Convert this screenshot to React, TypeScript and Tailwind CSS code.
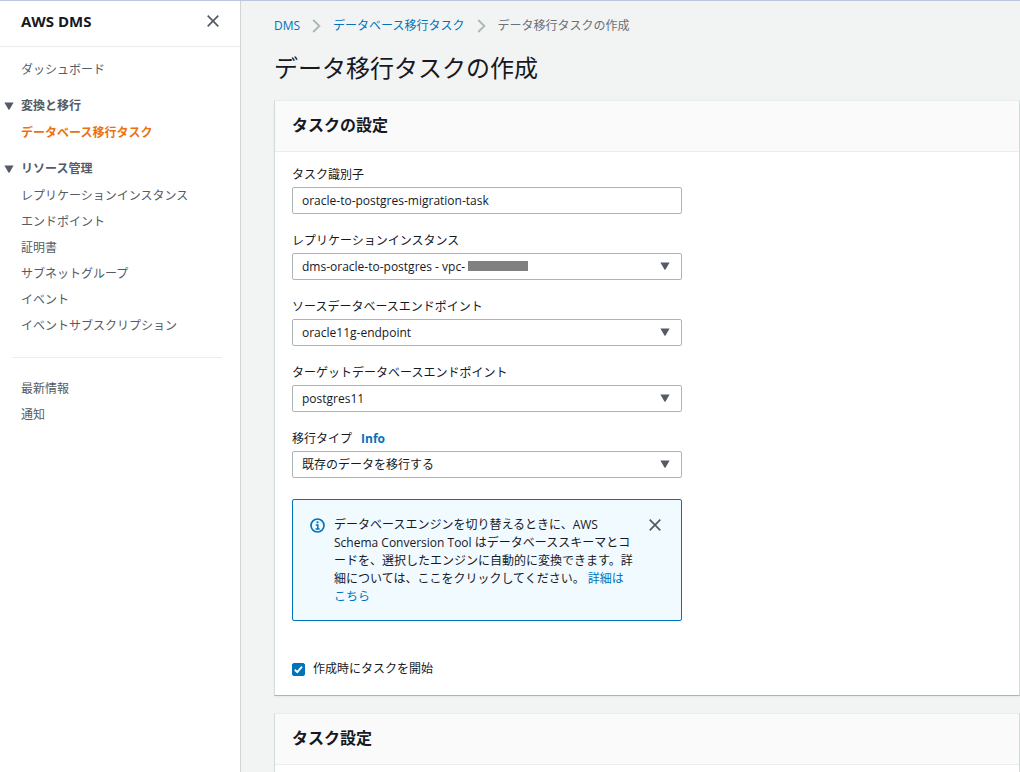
import type { ReactNode } from "react";

const resourceLinks = [
  "レプリケーションインスタンス",
  "エンドポイント",
  "証明書",
  "サブネットグループ",
  "イベント",
  "イベントサブスクリプション",
];

const footerLinks = ["最新情報", "通知"];

function CloseIcon() {
  return (
    <svg viewBox="0 0 12 12" className="h-3 w-3" fill="none" stroke="#545b64" strokeWidth="1.7">
      <path d="M0.7 0.7 11.3 11.3M11.3 0.7 0.7 11.3" />
    </svg>
  );
}

function Caret({ className = "" }: { className?: string }) {
  return (
    <svg viewBox="0 0 10 8" className={`h-2 w-[10px] ${className}`} fill="#545b64">
      <path d="M0.4 0.5h9.2L5.7 7.2q-.7 1-1.4 0z" />
    </svg>
  );
}

function Chevron() {
  return (
    <svg viewBox="0 0 9 14" className="h-[14px] w-[9px]" fill="none" stroke="#aab7b8" strokeWidth="1.8">
      <path d="M1.2 1 7.4 7 1.2 13" />
    </svg>
  );
}

function NavLink({ children }: { children: ReactNode }) {
  return (
    <li>
      <a href="#" className="block text-[#545b64]">
        {children}
      </a>
    </li>
  );
}

function NavSection({ title }: { title: string }) {
  return (
    <button type="button" aria-expanded="true" className="flex items-center gap-[7px] pl-1 font-bold text-[#545b64]">
      <Caret />
      {title}
    </button>
  );
}

function Sidebar() {
  return (
    <nav className="w-[241px] shrink-0 border-r border-[#d0d6d6] bg-white">
      <div className="flex h-[46px] items-center justify-between border-b border-[#eaeded] pb-[6px] pl-[21px] pr-[21px]">
        <h2 className="text-[15px] font-bold">AWS DMS</h2>
        <button type="button" aria-label="閉じる">
          <CloseIcon />
        </button>
      </div>

      <ul className="mt-[14px] pl-[21px]">
        <NavLink>ダッシュボード</NavLink>
      </ul>

      <div className="mt-[18px]">
        <NavSection title="変換と移行" />
        <a href="#" aria-current="page" className="mt-[9px] block pl-[21px] font-bold text-[#ec7211]">
          データベース移行タスク
        </a>
      </div>

      <div className="mt-[18px]">
        <NavSection title="リソース管理" />
        <ul className="mt-[9px] flex flex-col gap-2 pl-[21px]">
          {resourceLinks.map((label) => (
            <NavLink key={label}>{label}</NavLink>
          ))}
        </ul>
      </div>

      <hr className="ml-3 mr-[18px] mt-[22px] border-[#eaeded]" />

      <ul className="mt-[22px] flex flex-col gap-2 pl-[21px]">
        {footerLinks.map((label) => (
          <NavLink key={label}>{label}</NavLink>
        ))}
      </ul>
    </nav>
  );
}

function Breadcrumbs() {
  return (
    <nav aria-label="breadcrumb" className="flex items-center gap-3">
      <a href="#" className="text-[#0073bb]">
        DMS
      </a>
      <Chevron />
      <a href="#" className="text-[#0073bb]">
        データベース移行タスク
      </a>
      <Chevron />
      <span className="text-[#687078]">データ移行タスクの作成</span>
    </nav>
  );
}

function Card({ title, className = "", children }: { title: string; className?: string; children?: ReactNode }) {
  return (
    <section className={`border border-t-[#eaeded] border-x-[#d5dbdb] border-b-[#aab7b8] bg-white ${className}`}>
      <div className="flex h-[51px] items-center border-b border-[#eaeded] bg-[#fafafa] px-[17px] pb-[2px]">
        <h2 className="text-base font-bold">{title}</h2>
      </div>
      {children}
    </section>
  );
}

interface SelectFieldProps {
  id: string;
  label: string;
  value: string;
  info?: boolean;
  masked?: boolean;
}

function SelectField({ id, label, value, info, masked }: SelectFieldProps) {
  return (
    <div>
      <div className="flex gap-[9px]">
        <label htmlFor={id}>{label}</label>
        {info && (
          <a href="#" className="font-bold text-[#0073bb]">
            Info
          </a>
        )}
      </div>
      <div className="relative mt-[3px]">
        <select
          id={id}
          className="block h-[27px] w-full appearance-none rounded-xs border border-[#aab7b8] bg-white px-[9px]"
        >
          <option>{value}</option>
        </select>
        {masked && <span className="absolute left-44 top-2 h-[10px] w-[60px] bg-[#808080]" />}
        <Caret className="pointer-events-none absolute right-3 top-[9px]" />
      </div>
    </div>
  );
}

function InfoAlert() {
  return (
    <div className="mt-[3px] flex rounded-xs border border-[#0073bb] bg-[#f1faff] px-[17px] pb-[14px] pt-4">
      <svg viewBox="0 0 16 16" className="mt-[2px] h-[15px] w-[15px] shrink-0" fill="none" stroke="#0073bb">
        <circle cx="8" cy="8" r="6.9" strokeWidth="1.8" />
        <path d="M8 3.6v2" strokeWidth="2" />
        <path d="M6.2 7.4H8.3V11.4M5.9 11.6h4.4" strokeWidth="1.6" />
      </svg>
      <p className="ml-[9px] w-[301px]">
        データベースエンジンを切り替えるときに、AWS Schema Conversion Tool
        はデータベーススキーマとコードを、選択したエンジンに自動的に変換できます。詳細については、ここをクリックしてください。{" "}
        <a href="#" className="text-[#0073bb]">
          詳細はこちら
        </a>
      </p>
      <button type="button" aria-label="閉じる" className="ml-auto mr-[3px] mt-[3px] self-start">
        <CloseIcon />
      </button>
    </div>
  );
}

export default function App() {
  return (
    <div
      lang="ja"
      className="flex min-h-screen border-t border-[#bcc6df] bg-[#f2f3f3] font-['Open_Sans','Noto_Sans_CJK_JP',sans-serif] text-xs leading-[18px] text-[#16191f]"
    >
      <Sidebar />

      <main className="flex min-w-0 flex-1 flex-col pl-[33px] pt-4">
        <Breadcrumbs />
        <h1 className="mt-[17px] text-2xl leading-8">データ移行タスクの作成</h1>

        <Card title="タスクの設定" className="mt-4 shadow-xs">
          <form className="flex max-w-[424px] flex-col gap-[18px] px-[17px] pb-[17px] pt-[14px]">
            <div>
              <label htmlFor="task-id" className="block">
                タスク識別子
              </label>
              <input
                id="task-id"
                type="text"
                defaultValue="oracle-to-postgres-migration-task"
                className="mt-[3px] block h-[27px] w-full rounded-xs border border-[#aab7b8] bg-white px-[9px]"
              />
            </div>
            <SelectField
              id="replication"
              label="レプリケーションインスタンス"
              value="dms-oracle-to-postgres - vpc-"
              masked
            />
            <SelectField id="source" label="ソースデータベースエンドポイント" value="oracle11g-endpoint" />
            <SelectField id="target" label="ターゲットデータベースエンドポイント" value="postgres11" />
            <SelectField id="migration-type" label="移行タイプ" value="既存のデータを移行する" info />
            <InfoAlert />
            <label className="mt-[21px] flex items-center gap-2">
              <span className="relative flex">
                <input
                  type="checkbox"
                  defaultChecked
                  className="peer h-[13px] w-[13px] appearance-none rounded-xs border border-[#687078] checked:border-[#0073bb] checked:bg-[#0073bb]"
                />
                <svg
                  viewBox="0 0 13 13"
                  className="pointer-events-none absolute inset-0 hidden peer-checked:block"
                  fill="none"
                  stroke="#fff"
                  strokeWidth="1.9"
                >
                  <path d="M2.8 6.8 5.3 9.2 10 3.6" />
                </svg>
              </span>
              作成時にタスクを開始
            </label>
          </form>
        </Card>

        <Card title="タスク設定" className="mt-[17px] flex-1 border-b-0" />
      </main>
    </div>
  );
}
